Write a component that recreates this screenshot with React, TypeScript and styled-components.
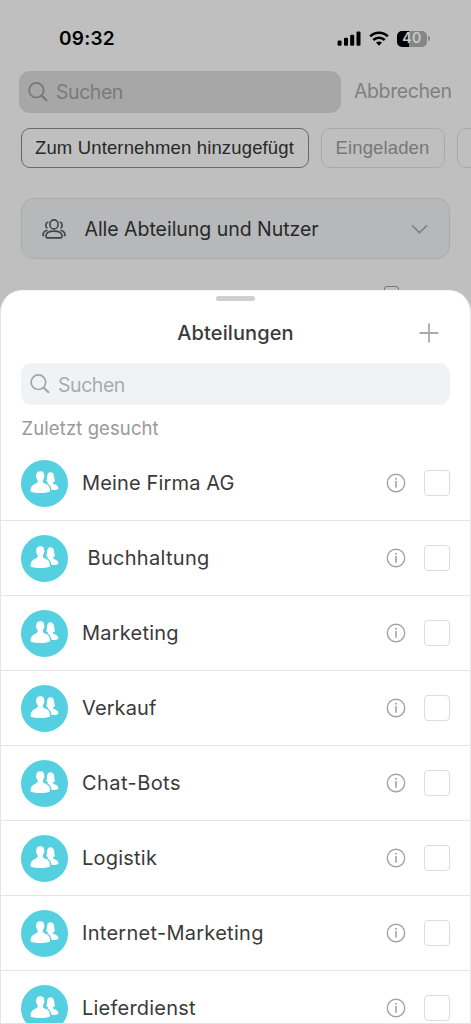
import React from 'react';
import styled, { createGlobalStyle } from 'styled-components';

const Global = createGlobalStyle`
  *, *::before, *::after { box-sizing: border-box; }
  html, body { margin: 0; padding: 0; background: #bfbfbf; }
  body { font-family: Inter, "Liberation Sans", sans-serif; overflow: hidden; }
  svg { display: block; flex: none; }
`;

const Screen = styled.div`
  width: 471px;
  height: 1024px;
  overflow: hidden;
  display: flex;
  flex-direction: column;
  background: #bfbfbf;
`;

const Label = styled.span<{ $size: number; $track?: number; $color?: string; $weight?: number }>`
  font-size: ${(p) => p.$size}px;
  letter-spacing: ${(p) => p.$track ?? 0}px;
  color: ${(p) => p.$color ?? '#3a3a3a'};
  font-weight: ${(p) => p.$weight ?? 400};
  line-height: 1.2;
  white-space: pre;
`;

const Backdrop = styled.div`
  height: 290px;
  flex: none;
`;

const StatusBar = styled.div`
  height: 71px;
  padding: 6px 41px 0 59px;
  display: flex;
  align-items: center;
  justify-content: space-between;
`;

const Clock = styled.div`
  padding-top: 2px;
`;

const StatusIcons = styled.div`
  display: flex;
  align-items: center;
`;

const SearchRow = styled.div`
  display: flex;
  align-items: center;
  padding-left: 19px;
  gap: 13px;
  height: 42px;
`;

const SearchField = styled.div<{ $bg: string; $width: number; $drop?: number }>`
  width: ${(p) => p.$width}px;
  height: 42px;
  padding-left: 9px;
  display: flex;
  align-items: center;
  gap: 8px;
  border-radius: 11px;
  background: ${(p) => p.$bg};

  ${Label} {
    padding-top: ${(p) => p.$drop ?? 2}px;
  }
`;

const Chips = styled.div`
  display: flex;
  gap: 12px;
  padding: 15px 0 0 21px;
  width: 471px;
  overflow: hidden;
`;

const Chip = styled.div<{ $active?: boolean; $width: number }>`
  flex: none;
  width: ${(p) => p.$width}px;
  height: 40px;
  padding-right: 1px;
  border: 1px solid ${(p) => (p.$active ? '#686868' : '#a9a9a9')};
  border-radius: 9px;
  display: flex;
  align-items: center;
  justify-content: center;
  font-family: "Liberation Sans", Arial, sans-serif;
`;

const Selector = styled.div`
  margin: 30px 21px 0;
  height: 61px;
  padding: 0 21px 0 20px;
  display: flex;
  align-items: center;
  border: 1px solid #a9abad;
  border-radius: 13px;
  background: #b6b8ba;
`;

const SelectorText = styled.div`
  flex: 1;
  margin-left: 18.5px;
  padding-top: 2px;
`;

const Peek = styled.div`
  width: 15px;
  height: 16px;
  margin: 27px 0 0 384px;
  border: 1.3px solid #777777;
  border-radius: 3px;
`;

const Sheet = styled.section`
  position: relative;
  flex: 1;
  min-height: 0;
  overflow: hidden;
  background: #ffffff;
  border: 1px solid #e5e5e5;
  border-top-color: #f6f6f6;
  border-radius: 22px 22px 0 0;
`;

const Handle = styled.div`
  width: 39px;
  height: 5px;
  margin: 5px auto 0;
  border-radius: 3px;
  background: #cfcfcf;
`;

const SheetHeader = styled.header`
  height: 62px;
  padding: 2px 31px 0 51px;
  display: grid;
  grid-template-columns: 1fr 20px;
  align-items: center;
  text-align: center;
`;

const SheetSearch = styled.div`
  padding-left: 20px;
`;

const SectionLabel = styled.div`
  height: 41px;
  padding: 12px 0 0 20.5px;
`;

const List = styled.div`
  display: flex;
  flex-direction: column;
`;

const Row = styled.div`
  height: 75px;
  padding: 0 20px;
  display: flex;
  align-items: center;
  border-bottom: 1px solid #e5e5e5;
`;

const Avatar = styled.div`
  width: 47px;
  height: 47px;
  padding-bottom: 2px;
  border-radius: 50%;
  background: #55d0e0;
  display: flex;
  align-items: center;
  justify-content: center;
`;

const RowText = styled.div<{ $indent?: number }>`
  flex: 1;
  padding-left: ${(p) => 14 + (p.$indent ?? 0)}px;
`;

const Checkbox = styled.div`
  width: 26px;
  height: 26px;
  margin-left: 18px;
  border: 1px solid #dcdcdc;
  border-radius: 4px;
`;

const SearchIcon = ({ color }: { color: string }) => (
  <svg width="20" height="20" viewBox="0 0 20 20" fill="none" stroke={color} strokeLinecap="round">
    <circle cx="8.4" cy="8.2" r="7.3" strokeWidth="1.7" />
    <path d="M13.8 13.8L18.4 18.2" strokeWidth="2.2" />
  </svg>
);

const Signal = () => (
  <svg width="24" height="15" viewBox="0 0 24 15">
    <rect x="0.6" y="9.6" width="4" height="5.2" rx="1.2" />
    <rect x="7" y="6.8" width="4" height="8" rx="1.2" />
    <rect x="13.2" y="3.8" width="4" height="11" rx="1.2" />
    <rect x="19.5" y="0.6" width="4" height="14.2" rx="1.2" />
  </svg>
);

const WifiArt = ({ className }: { className?: string }) => (
  <svg className={className} width="20" height="15" viewBox="0 0 20 15" fill="none" stroke="#000" strokeWidth="2.7">
    <path d="M1.2 5.4C6.2 0.5 13.8 0.5 18.800 5.400" />
    <path d="M4.300 8.900C7.500 6 12.500 6 15.700 8.900" />
    <path d="M7 11.600C8.700 10.100 11.300 10.100 13 11.600L10 14.700Z" fill="#000" stroke="none" />
  </svg>
);

const Wifi = styled(WifiArt)`
  margin-left: 8px;
`;

const Battery = styled.div`
  width: 30px;
  height: 16px;
  margin-left: 8px;
  border-radius: 5px;
  display: flex;
  align-items: center;
  justify-content: center;
  background: linear-gradient(90deg, #000 0 12.5px, #858585 12.5px);
`;

const BatteryTip = styled.div`
  width: 2px;
  height: 5px;
  margin-left: 1px;
  border-radius: 0 2px 2px 0;
  background: #858585;
`;

const GroupIcon = () => (
  <svg width="24" height="20" viewBox="0 0 24 20" fill="none" stroke="#444" strokeWidth="1.6" strokeLinecap="round" strokeLinejoin="round">
    <rect x="8" y="0.9" width="8" height="9" rx="4" />
    <path d="M4 17C4 14 6.700 12.100 12 12.100S20 14 20 17C20 18.300 19.600 18.900 18.600 18.900H5.400C4.400 18.900 4 18.300 4 17Z" />
    <path d="M5.900 3.200C3.300 3.600 3.300 7.700 5 8.800M18.100 3.200C20.700 3.600 20.700 7.700 19 8.800" />
    <path d="M4.800 11.400C2.500 12 0.900 13.800 0.900 16.400H1.700M19.200 11.400C21.500 12 23.100 13.800 23.100 16.400H22.300" />
  </svg>
);

const Chevron = () => (
  <svg width="17" height="10" viewBox="0 0 17 10" fill="none" stroke="#7d7f80" strokeWidth="1.5">
    <path d="M1 1.200L8.500 8.600L16 1.200" />
  </svg>
);

const Plus = () => (
  <svg width="20" height="20" viewBox="0 0 20 20" stroke="#a9a9a9" strokeWidth="1.8">
    <path d="M10 0.600V19.400M0.600 10H19.400" />
  </svg>
);

const PeopleIcon = () => (
  <svg width="29" height="23" viewBox="0 0 29 23" fill="#fff">
    <path d="M10.300 0.300C13 0.200 14.200 1.700 14.200 4C14.200 4.600 14.500 4.900 14.500 5.600C14.500 6.700 13.900 6.900 13.600 7.800C13.300 8.900 12.900 9.300 12.900 10.100C12.900 12 14.300 12.300 16.400 13.200C18.500 14.100 19.700 15.400 19.900 18.200L20 20.400C17 21.600 13.900 21.900 10.200 21.900S3.400 21.600 0.500 20.400C0.600 17.200 1.200 14.600 3.800 13.400C6 12.400 7.800 12 7.800 10.100C7.800 9.300 7.100 8.900 6.800 7.800C6.500 6.900 6 6.700 6 5.600C6 4.900 6.300 4.600 6.300 4C6.300 1.700 7.700 0.400 10.300 0.300Z" />
    <path d="M20.500 1.300C23.200 1.200 24.100 3.400 24.200 6C24.300 7.900 24.700 9 25 9.900C24.600 10.700 23.700 10.800 23 10.900C22.900 12.300 23.500 12.900 25.200 13.500C27.300 14.200 28.300 15.400 28.400 17.900C26.500 18.800 24.100 19 21.500 19C21.100 15.800 20 13.400 17 12.200C17.700 11.900 18.300 11.700 18.400 10.900C17.600 10.800 16.800 10.700 16.200 9.900C16.700 9 16.900 7.900 17 6C17.100 3.400 17.900 1.300 20.500 1.300Z" />
  </svg>
);

const InfoIcon = () => (
  <svg width="20" height="20" viewBox="0 0 20 20" fill="none" stroke="#a3a3a3">
    <circle cx="10" cy="10" r="8.700" strokeWidth="1.400" />
    <path d="M10 8V14.800" strokeWidth="1.600" />
    <circle cx="10" cy="5.700" r="1" fill="#a3a3a3" stroke="none" />
  </svg>
);

const departments = [
  { name: 'Meine Firma AG', track: 0.15 },
  { name: 'Buchhaltung', track: 0.3, indent: 5.5 },
  { name: 'Marketing', track: 0.23 },
  { name: 'Verkauf', track: 0.1 },
  { name: 'Chat-Bots', track: 0.43 },
  { name: 'Logistik', track: 0.22 },
  { name: 'Internet-Marketing', track: 0.28 },
  { name: 'Lieferdienst', track: 0.22 },
];

export default function App() {
  return (
    <>
      <Global />
      <Screen>
        <Backdrop>
          <StatusBar>
            <Clock>
              <Label $size={19} $weight={600} $color="#000" $track={0.25}>09:32</Label>
            </Clock>
            <StatusIcons>
              <Signal />
              <Wifi />
              <Battery>
                <Label $size={14} $weight={600} $color="#c8c8c8" $track={0.5}>40</Label>
              </Battery>
              <BatteryTip />
            </StatusIcons>
          </StatusBar>
          <SearchRow>
            <SearchField $bg="#a7a7a7" $width={322}>
              <SearchIcon color="#777777" />
              <Label $size={19.5} $color="#7b7b7b" $track={-0.45}>Suchen</Label>
            </SearchField>
            <Label $size={19.5} $color="#7f7f7f" $track={-0.4}>Abbrechen</Label>
          </SearchRow>
          <Chips>
            <Chip $active $width={288}>
              <Label $size={18.5} $color="#292929" $track={0.15}>Zum Unternehmen hinzugefügt</Label>
            </Chip>
            <Chip $width={124}>
              <Label $size={18.5} $color="#777777" $track={0.13}>Eingeladen</Label>
            </Chip>
            <Chip $width={124} />
          </Chips>
          <Selector>
            <GroupIcon />
            <SelectorText>
              <Label $size={19.5} $color="#292929" $track={-0.03}>Alle Abteilung und Nutzer</Label>
            </SelectorText>
            <Chevron />
          </Selector>
          <Peek />
        </Backdrop>
        <Sheet>
          <Handle />
          <SheetHeader>
            <Label $size={20} $weight={500} $track={0.1}>Abteilungen</Label>
            <Plus />
          </SheetHeader>
          <SheetSearch>
            <SearchField $bg="#eff3f6" $width={429} $drop={4}>
              <SearchIcon color="#a3a5a6" />
              <Label $size={19.5} $color="#a9abac" $track={-0.45}>Suchen</Label>
            </SearchField>
          </SheetSearch>
          <SectionLabel>
            <Label $size={18.5} $color="#999999" $track={0.1}>Zuletzt gesucht</Label>
          </SectionLabel>
          <List>
            {departments.map((d) => (
              <Row key={d.name}>
                <Avatar>
                  <PeopleIcon />
                </Avatar>
                <RowText $indent={d.indent}>
                  <Label $size={20} $track={d.track}>{d.name}</Label>
                </RowText>
                <InfoIcon />
                <Checkbox />
              </Row>
            ))}
          </List>
        </Sheet>
      </Screen>
    </>
  );
}
